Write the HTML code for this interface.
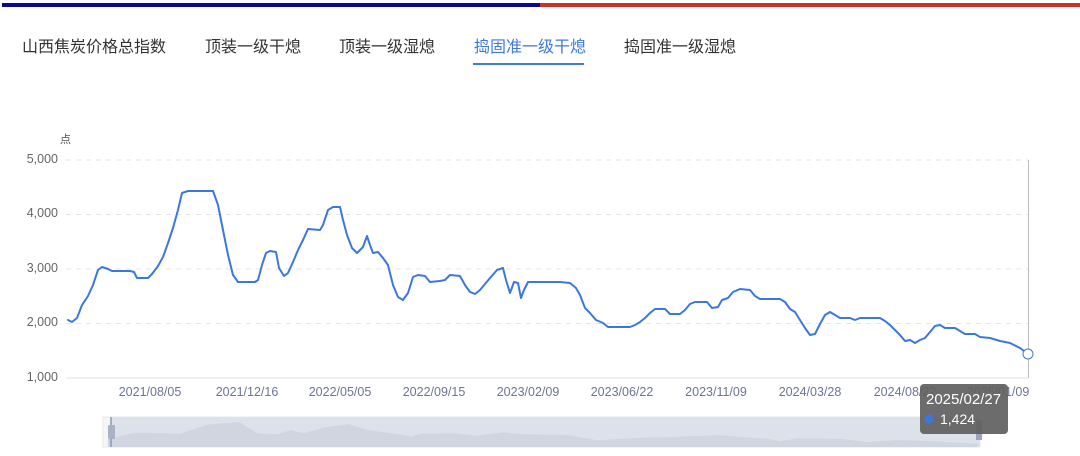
<!DOCTYPE html>
<html><head><meta charset="utf-8"><style>
body{margin:0;width:1080px;height:456px;background:#fff;overflow:hidden;font-family:"Liberation Sans","Noto Sans CJK SC",sans-serif;position:relative}
.bar{position:absolute;top:3px;height:4px}
.tab{position:absolute;top:33px;font-size:16px;color:#333}
.yl{position:absolute;left:0;width:58px;text-align:right;font-size:12.5px;color:#666}
.xl{position:absolute;top:385px;font-size:12.5px;color:#6e7493;transform:translateX(-50%)}
</style></head><body>
<div class="bar" style="left:2px;width:538px;background:#0a0a8a"></div>
<div class="bar" style="left:540px;width:540px;background:#c83228"></div>
<div class="tab" style="left:22px">山西焦炭价格总指数</div>
<div class="tab" style="left:205px">顶装一级干熄</div>
<div class="tab" style="left:339px">顶装一级湿熄</div>
<div class="tab" style="left:474px;color:#3d7ae0">捣固准一级干熄</div>
<div style="position:absolute;left:473px;top:63px;width:111px;height:2px;background:#3d7ae0"></div>
<div class="tab" style="left:624px">捣固准一级湿熄</div>
<div style="position:absolute;left:60px;top:131px;font-size:11px;color:#555">点</div>
<div class="yl" style="top:152px">5,000</div>
<div class="yl" style="top:206px">4,000</div>
<div class="yl" style="top:261px">3,000</div>
<div class="yl" style="top:315px">2,000</div>
<div class="yl" style="top:370px">1,000</div>
<div class="xl" style="left:150px">2021/08/05</div>
<div class="xl" style="left:247px">2021/12/16</div>
<div class="xl" style="left:340px">2022/05/05</div>
<div class="xl" style="left:434px">2022/09/15</div>
<div class="xl" style="left:528px">2023/02/09</div>
<div class="xl" style="left:622px">2023/06/22</div>
<div class="xl" style="left:716px">2023/11/09</div>
<div class="xl" style="left:810px">2024/03/28</div>
<div class="xl" style="left:905px">2024/08/22</div>
<div class="xl" style="left:998px">2025/01/09</div>
<svg width="1080" height="456" style="position:absolute;left:0;top:0">
<g stroke="#e3e5ec" stroke-dasharray="5,5"><line x1="66" y1="160" x2="1028" y2="160"/><line x1="66" y1="214.5" x2="1028" y2="214.5"/><line x1="66" y1="269" x2="1028" y2="269"/><line x1="66" y1="323.5" x2="1028" y2="323.5"/></g>
<line x1="66" y1="378" x2="1028" y2="378" stroke="#dfe2ef"/>
<line x1="1028.5" y1="160" x2="1028.5" y2="378" stroke="#bbb"/>
<polyline fill="none" stroke="#3a78e0" stroke-width="2" stroke-linejoin="round" stroke-linecap="round" points="68,320 72,322 77,318 82,305 88,296 93,285 98,270 102,267 108,269 112,271 130,271 134,272 137,278 141,278 148,278 152,274 158,266 163,257 168,243 173,228 178,210 182,193 188,191 213,191 218,205 223,230 228,255 233,275 238,282 255,282 258,280 262,265 266,253 270,251 276,252 279,268 284,276 288,273 293,262 298,250 303,240 308,229 320,230 323,225 328,210 333,207 340,207 343,220 347,235 352,248 357,253 363,247 367,236 370,245 373,253 378,252 383,258 388,265 393,285 398,297 403,300 408,293 413,277 418,275 425,276 430,282 440,281 445,280 450,275 460,276 465,285 470,292 475,294 480,290 485,284 490,278 497,270 503,268 506,280 510,293 514,282 518,283 521,298 524,290 528,282 560,282 570,283 576,288 580,295 585,308 590,313 596,320 603,323 608,327 630,327 635,325 640,322 645,318 650,313 655,309 665,309 670,314 680,314 685,310 690,304 695,302 707,302 712,308 718,307 722,300 728,298 733,292 740,289 750,290 755,296 760,299 780,299 785,302 790,309 795,312 800,320 805,328 810,335 815,334 820,324 825,315 830,312 835,315 840,318 850,318 855,320 860,318 880,318 885,321 890,325 895,330 900,335 905,341 910,340 915,343 920,340 925,338 930,332 935,326 940,325 945,328 955,328 960,331 965,334 975,334 980,337 990,338 1000,341 1010,343 1020,348 1028,354"/>
<circle cx="1028" cy="354" r="5" fill="#fff" stroke="#3a78e0" stroke-width="1"/>
<rect x="103" y="417" width="877" height="30" fill="#f5f6f8" stroke="#e6e8ee"/>
<rect x="111" y="417" width="869" height="30" fill="#dde1ea"/>
<g transform="translate(46.3,396.7) scale(0.906,0.133)">
<polygon fill="#d0d5e0" points="68,378 68,320 98,270 112,271 148,278 178,210 213,191 233,275 255,282 270,251 284,276 308,229 333,207 357,253 393,285 403,300 413,277 450,275 475,294 503,268 528,282 576,288 608,327 655,309 695,302 740,289 760,299 800,320 810,335 830,312 880,318 905,341 940,325 975,334 1028,354 1028,378"/>
</g>
<line x1="111" y1="417" x2="111" y2="447" stroke="#8c97b0" stroke-width="1.5"/>
<rect x="108" y="425" width="7" height="14" rx="1" fill="#a9b3c8"/>
<rect x="976" y="420" width="6" height="20" fill="#9aa5bc"/>
<rect x="920" y="384" width="88" height="50" rx="4" fill="#5f5f5f" fill-opacity="0.92"/>
<text x="926" y="404" font-size="15" fill="#fff" font-family="Liberation Sans">2025/02/27</text>
<circle cx="929" cy="419" r="4.5" fill="#3a78e0"/>
<text x="940" y="424" font-size="14" fill="#fff" font-family="Liberation Sans">1,424</text>
</svg>
</body></html>
